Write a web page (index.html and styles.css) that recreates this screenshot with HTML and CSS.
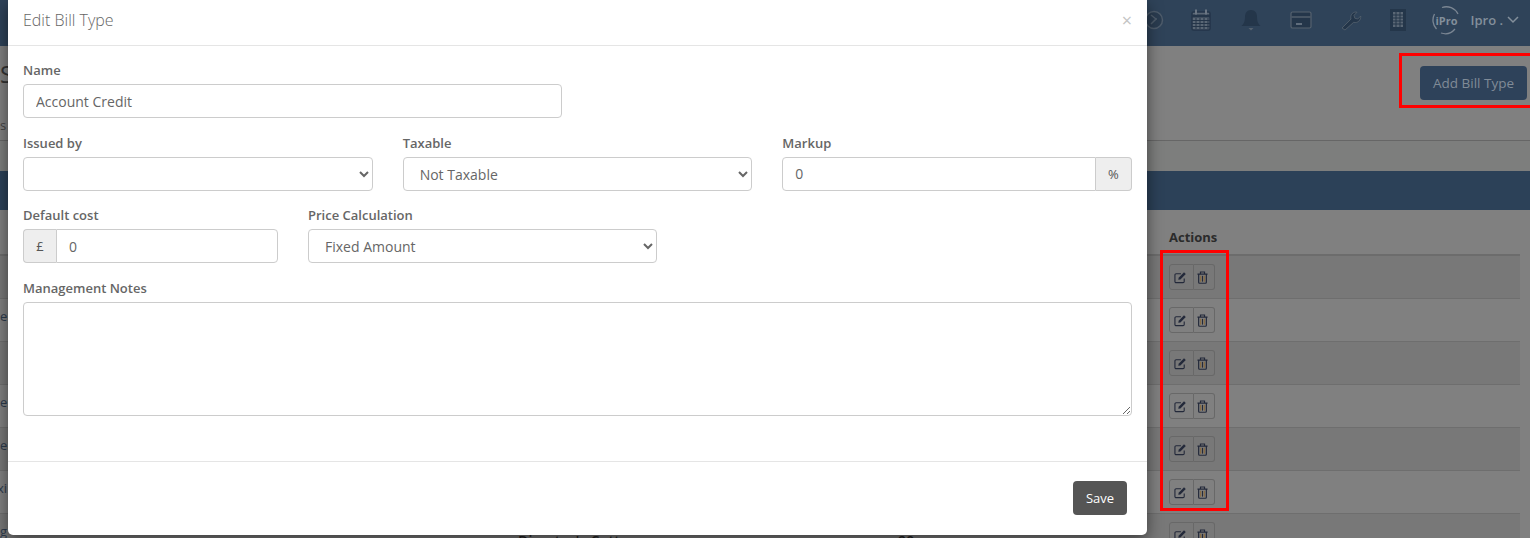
FILE: index.html
```html
<!DOCTYPE html>
<html lang="en">
<head>
<meta charset="utf-8">
<title>Edit Bill Type</title>
<link rel="stylesheet" href="styles.css">
</head>
<body>
<svg class="defs" width="0" height="0" aria-hidden="true">
  <symbol id="edit" viewBox="0 0 14 14">
    <path d="M11 8v3.200a1.300 1.300 0 0 1-1.300 1.300H2.300a1.300 1.300 0 0 1-1.300-1.300V4.300A1.300 1.300 0 0 1 2.300 3H7.500" fill="none" stroke="currentColor" stroke-width="1.200"/>
    <path d="M5 7.200 10.800 1.400l1.900 1.900L6.900 9.100 4.600 9.500z" fill="currentColor"/>
  </symbol>
  <symbol id="trash" viewBox="0 0 12 14">
    <path d="M.5 3.300h11M3.800 3.100V1h4.400v2.100M1.800 3.300v9a1 1 0 0 0 1 1h6.400a1 1 0 0 0 1-1v-9" fill="none" stroke="currentColor" stroke-width="1.300"/>
    <path d="M4 5.200v6.300M8 5.200v6.300" fill="none" stroke="#8a6a3c" stroke-width="1.200"/>
    <path d="M6 5.200v6.300" fill="none" stroke="currentColor" stroke-width="1.200"/>
  </symbol>
</svg>

<div class="page">
  <header class="topbar">
    <svg class="nav-icon tight" width="24" height="24" viewBox="0 0 24 24"><circle cx="12" cy="12" r="8.500" fill="#2a3c50" stroke="#4e5c6b" stroke-width="1.500"/><path d="M9 7l5 4-5 5M14 11l1 0" fill="none" stroke="#4e5c6b" stroke-width="1.500"/></svg>
    <svg class="nav-icon" width="24" height="24" viewBox="0 0 24 24"><rect x="3" y="4" width="18" height="18" rx="1.500" fill="#5a6775" stroke="#243549" stroke-width="1.500"/><path d="M3 8h18" stroke="#243549" stroke-width="3"/><path d="M7 1.500v5M17 1.500v5" stroke="#6b7683" stroke-width="2"/><path d="M3 12.500h18M3 15.500h18M3 18.500h18M7 10v11M11 10v11M15 10v11M19 10v11" stroke="#243549" stroke-width="1"/></svg>
    <svg class="nav-icon" width="24" height="24" viewBox="0 0 24 24"><path d="M12 2c4 0 6 3 6 7 0 5 1.500 7 3.500 9h-19C4.500 16 6 14 6 9c0-4 2-7 6-7z" fill="#24364a"/><path d="M9.500 20h5l-2.500 2.500z" fill="#56626f"/></svg>
    <svg class="nav-icon" width="24" height="24" viewBox="0 0 24 24"><rect x="2" y="4" width="20" height="16" rx="1.500" fill="#24364a" stroke="#56626f" stroke-width="1.200"/><path d="M2.500 9h19" stroke="#56626f" stroke-width="1.400"/><path d="M7 16h6" stroke="#7b8693" stroke-width="1.400"/></svg>
    <svg class="nav-icon tight" width="24" height="24" viewBox="0 0 24 24"><path d="M3 20l9-9c-1-3 1-7 5-7l1 .3-3 3 .8 2.900 2.900.8 3-3c.5 4-3 7.500-7 6.300L6 22z" fill="#24364a" stroke="#56626f" stroke-width=".8"/></svg>
    <svg class="nav-icon last" width="24" height="24" viewBox="0 0 24 24"><rect x="4" y="1" width="16" height="22" fill="#24364a"/><path d="M7 4h10v15H7z" fill="#5a6775"/><path d="M7 7h10M7 10h10M7 13h10M7 16h10M10 4v15M14 4v15" stroke="#24364a" stroke-width="1"/></svg>
    <div class="brand">
      <span class="logo">
        <svg class="logo-ring" width="30" height="30" viewBox="0 0 30 30"><path d="M11 2.500A13 13 0 0 1 27 9M24 24a13 13 0 0 1-14 4M5.500 24A13 13 0 0 1 3.500 9" fill="none" stroke="#7b8693" stroke-width="1.300"/></svg>
        <span class="logo-text">iPro</span>
      </span>
      <span class="user">Ipro .</span>
      <svg width="12" height="8" viewBox="0 0 12 8"><path d="M1 1l5 5 5-5" fill="none" stroke="#838f9b" stroke-width="1.500"/></svg>
    </div>
  </header>

  <section class="title-area">
    <div class="title-text">
      <div class="page-title">S</div>
      <div class="page-sub">s</div>
    </div>
    <button class="add-btn" type="button">Add Bill Type</button>
  </section>
  <div class="band"></div>
  <div class="blue-bar"></div>

  <div class="table">
    <div class="row head"><span></span><span></span><span></span><b>Actions</b></div>
    <div class="row odd"><span class="first"></span><span></span><span></span><div class="actions"><span class="act"><svg width="13" height="13"><use href="#edit"/></svg></span><span class="act"><svg width="11" height="13"><use href="#trash"/></svg></span></div></div>
    <div class="row"><span class="first">e</span><span></span><span></span><div class="actions"><span class="act"><svg width="13" height="13"><use href="#edit"/></svg></span><span class="act"><svg width="11" height="13"><use href="#trash"/></svg></span></div></div>
    <div class="row odd"><span class="first"></span><span></span><span></span><div class="actions"><span class="act"><svg width="13" height="13"><use href="#edit"/></svg></span><span class="act"><svg width="11" height="13"><use href="#trash"/></svg></span></div></div>
    <div class="row"><span class="first">e</span><span></span><span></span><div class="actions"><span class="act"><svg width="13" height="13"><use href="#edit"/></svg></span><span class="act"><svg width="11" height="13"><use href="#trash"/></svg></span></div></div>
    <div class="row odd"><span class="first">e</span><span></span><span></span><div class="actions"><span class="act"><svg width="13" height="13"><use href="#edit"/></svg></span><span class="act"><svg width="11" height="13"><use href="#trash"/></svg></span></div></div>
    <div class="row"><span class="first cut">xi</span><span></span><span></span><div class="actions"><span class="act"><svg width="13" height="13"><use href="#edit"/></svg></span><span class="act"><svg width="11" height="13"><use href="#trash"/></svg></span></div></div>
    <div class="row odd"><span class="first">g</span><span class="low">Director's Cottage</span><span class="low">20</span><div class="actions"><span class="act"><svg width="13" height="13"><use href="#edit"/></svg></span><span class="act"><svg width="11" height="13"><use href="#trash"/></svg></span></div></div>
  </div>
</div>

<div class="mark mark-add"></div>
<div class="mark mark-actions"></div>

<div class="modal" role="dialog">
  <div class="modal-head">
    <h4>Edit Bill Type</h4>
    <span class="close">×</span>
  </div>
  <div class="modal-body">
    <div class="form-row">
      <div class="field f-name">
        <label>Name</label>
        <input type="text" value="Account Credit">
      </div>
    </div>
    <div class="form-row">
      <div class="field f-third">
        <label>Issued by</label>
        <select><option></option></select>
      </div>
      <div class="field f-third">
        <label>Taxable</label>
        <select><option>Not Taxable</option></select>
      </div>
      <div class="field f-third">
        <label>Markup</label>
        <div class="group"><input type="text" value="0"><span class="addon addon-r">%</span></div>
      </div>
    </div>
    <div class="form-row">
      <div class="field f-cost">
        <label>Default cost</label>
        <div class="group"><span class="addon addon-l">£</span><input type="text" value="0"></div>
      </div>
      <div class="field f-price">
        <label>Price Calculation</label>
        <select><option>Fixed Amount</option></select>
      </div>
    </div>
    <div class="field">
      <label>Management Notes</label>
      <textarea></textarea>
    </div>
  </div>
  <div class="modal-foot">
    <button class="save" type="button">Save</button>
  </div>
</div>
</body>
</html>
```
FILE: styles.css
```css
* { box-sizing: border-box; }
html, body { margin: 0; height: 538px; overflow: hidden; }
body { font-family: "Open Sans", sans-serif; font-size: 13px; color: #555; background: #808080; position: relative; }
.defs { position: absolute; }

.page { height: 538px; overflow: hidden; }
.topbar { height: 46px; background: #2f4359; display: flex; align-items: center; justify-content: flex-end; padding-right: 11px; padding-bottom: 6px; }
.nav-icon { margin-right: 26px; }
.nav-icon.tight { margin-right: 23px; }
.nav-icon.last { margin-right: 21px; }
.brand { display: flex; align-items: center; }
.logo { position: relative; width: 30px; height: 30px; display: flex; align-items: center; justify-content: center; margin-right: 9px; }
.logo-ring { position: absolute; inset: 0; }
.logo-text { font-size: 11px; font-weight: 700; color: #838f9b; position: relative; }
.user { font-size: 13px; font-weight: 600; color: #838f9b; margin-right: 4px; }

.title-area { height: 95px; background: #808080; border-bottom: 1px solid #666; display: flex; justify-content: space-between; padding: 20px 3px 0 0; }
.page-title { font-size: 24px; line-height: 30px; color: #333; margin-top: -7px; }
.page-sub { font-size: 13px; line-height: 18px; color: #444; margin-top: 27px; }
.add-btn { width: 107px; height: 34px; border: 0; border-radius: 4px; background: #2e425a; color: #808b97; font: 13.5px "Open Sans", sans-serif; }
.band { height: 30px; background: #7d7e7d; }
.blue-bar { height: 39px; background: #2c4158; }

.table { margin-right: 10px; }
.row { display: grid; grid-template-columns: 518px 380px 271px 1fr; height: 43px; border-bottom: 1px solid #6e6e6e; background: #808080; align-items: center; }
.row.odd { background: #787878; }
.row.head { height: 46px; background: #808080; border-bottom: 2px solid #6c6c6c; padding-top: 10px; }
.row.head b { font-size: 13px; color: #2b2b2b; }
.first { color: #2c3a4c; font-size: 13px; margin-top: -8px; }
.first.cut { margin-left: -3px; }
.low { color: #222; font-size: 14px; font-weight: 600; letter-spacing: .3px; align-self: start; padding-top: 17px; }
.actions { display: flex; }
.act { width: 25px; height: 26px; padding-right: 3px; border: 1px solid #686868; display: flex; align-items: center; justify-content: center; color: #23293a; }
.act:first-child { border-radius: 3px 0 0 3px; }
.act:last-child { border-left: 0; width: 21px; border-radius: 0 3px 3px 0; }

.mark { position: absolute; border: 3px solid #f00; }
.mark-add { left: 1399px; top: 53px; width: 135px; height: 55px; }
.mark-actions { left: 1160px; top: 250px; width: 69px; height: 261px; }

.modal { position: absolute; left: 8px; top: 0; width: 1139px; height: 535px; background: #fff; border-radius: 0 0 5px 5px; box-shadow: 0 5px 15px rgba(0,0,0,.5); display: flex; flex-direction: column; }
.modal-head { height: 46px; flex: none; border-bottom: 1px solid #e5e5e5; padding: 0 15px; display: flex; align-items: center; justify-content: space-between; }
.modal-head h4 { margin: 0; font-size: 16px; font-weight: 300; color: #666; margin-top: -5px; }
.close { font-size: 18px; color: #c4c4c4; margin-top: -5px; }
.modal-body { padding: 15px 15px 0; flex: 1; }
label { display: block; font-size: 13px; font-weight: 600; line-height: 18px; color: #666; margin-bottom: 5px; }
.form-row { display: flex; gap: 30px; margin-bottom: 15.5px; }
.field { min-width: 0; }
.f-name { width: 539px; }
.f-third { width: 349.67px; }
.f-cost { width: 255px; }
.f-price { width: 349px; }
input, select, textarea { display: block; width: 100%; height: 34px; border: 1px solid #ccc; border-radius: 4px; background: #fff; color: #666; font: 14px "Open Sans", sans-serif; padding: 6px 12px; outline: 0; }
.group { display: flex; }
.group input { flex: 1; min-width: 0; }
.addon { height: 34px; background: #eee; border: 1px solid #ccc; display: flex; align-items: center; justify-content: center; font-size: 13px; color: #555; flex: none; }
.addon-r { width: 36px; border-left: 0; border-radius: 0 4px 4px 0; }
.addon-l { width: 33px; border-right: 0; border-radius: 4px 0 0 4px; }
.group input:first-child { border-radius: 4px 0 0 4px; }
.group .addon-l + input { border-radius: 0 4px 4px 0; }
textarea { height: 114px; }
.modal-foot { height: 74px; flex: none; border-top: 1px solid #e5e5e5; padding: 19px 20px 0 0; display: flex; justify-content: flex-end; align-items: flex-start; }
.save { width: 54px; height: 34px; border: 0; border-radius: 4px; background: #555; color: #fff; font: 13px "Open Sans", sans-serif; }
```
